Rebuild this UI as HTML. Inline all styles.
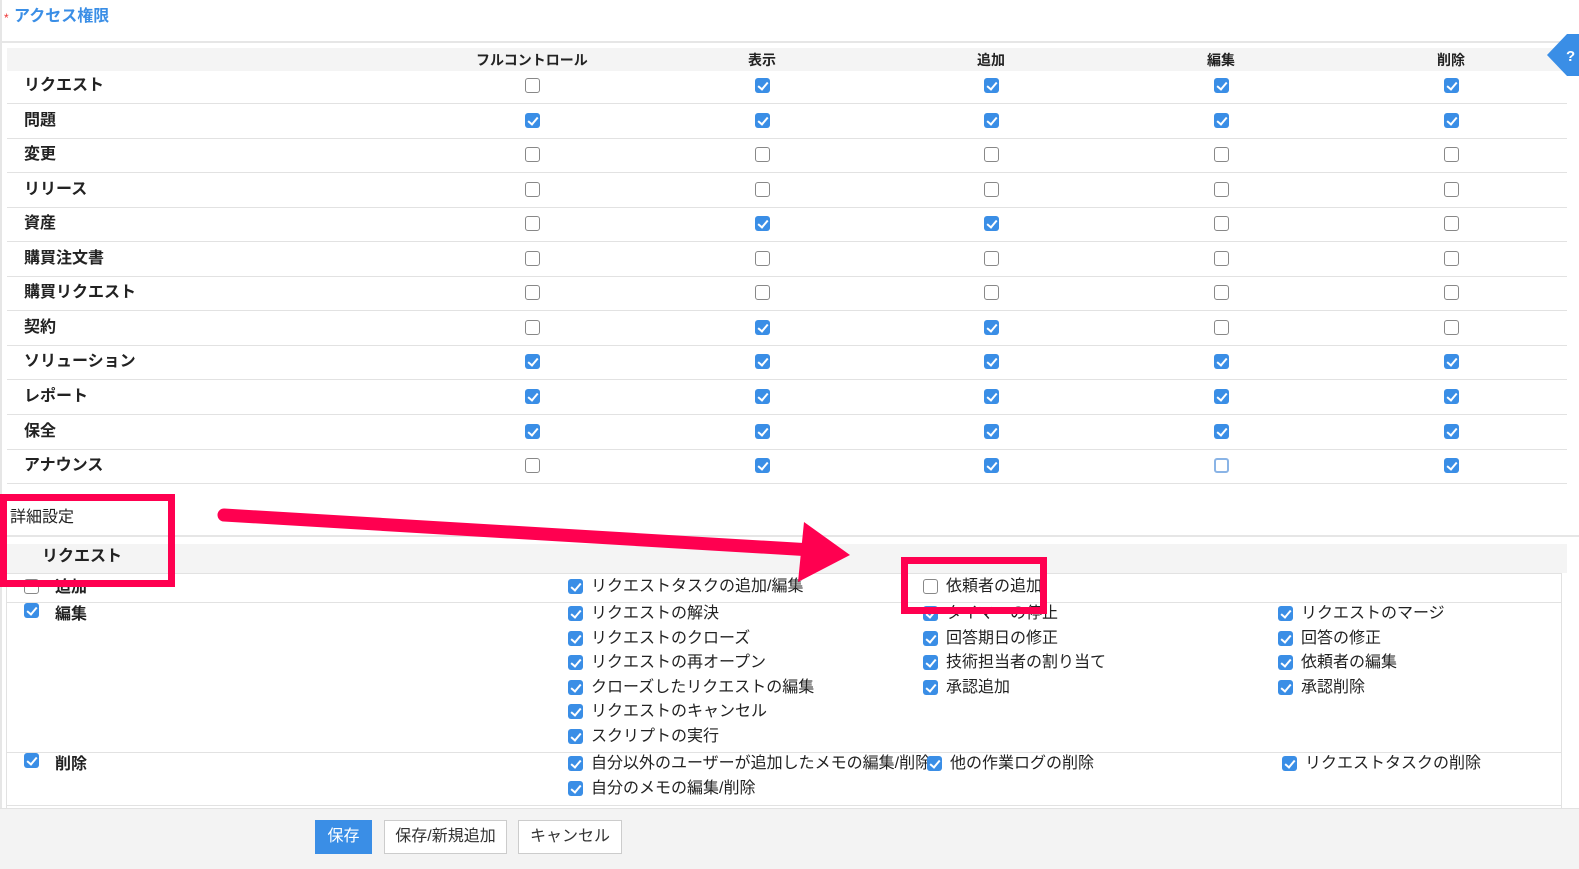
<!DOCTYPE html>
<html><head><meta charset="utf-8"><style>
body{margin:0;width:1579px;height:868px;position:relative;overflow:hidden;background:#fff;font-family:"Liberation Sans","Noto Sans CJK JP",sans-serif;color:#222}
.a{position:absolute}
.t{position:absolute;white-space:nowrap;font-size:16px;line-height:20px}
.b{font-weight:bold}
.c,.u{position:absolute;width:15px;height:15px;border-radius:3px;box-sizing:border-box}
.c{background:#3a8ee6}
.c:after{content:"";position:absolute;left:5px;top:2px;width:4px;height:8px;border:solid #fff;border-width:0 2px 2px 0;transform:rotate(40deg)}
.u{border:1px solid #888;background:#fff}
.hl{position:absolute;height:1px;background:#e2e2e2}
</style></head><body>
<div class="a" style="left:0;top:0;width:2px;height:808px;background:#e6e6e6"></div>
<div class="t" style="left:4px;top:8px;color:#e33;font-size:12px">*</div>
<div class="t b" style="left:14px;top:7px;color:#3a8ee6;font-size:16px">アクセス権限</div>
<div class="a" style="left:2px;top:41px;width:1577px;height:2px;background:#e6e6e6"></div>
<div class="a" style="left:7px;top:48px;width:1560px;height:23px;background:#f4f4f4"></div>
<div class="t b" style="left:476px;top:50px;font-size:14px">フルコントロール</div>
<div class="t b" style="left:748px;top:50px;font-size:14px" >表示</div>
<div class="t b" style="left:977px;top:50px;font-size:14px">追加</div>
<div class="t b" style="left:1207px;top:50px;font-size:14px">編集</div>
<div class="t b" style="left:1437px;top:50px;font-size:14px">削除</div>
<svg class="a" style="left:1545px;top:34px" width="34" height="42"><polygon points="22,0 34,0 34,42 22,42 2,21" fill="#3a8ee6"/><text x="21" y="27" fill="#fff" font-size="15" font-weight="bold" font-family="Liberation Sans">?</text></svg>
<div id="rows"></div>
<script>
var names=["リクエスト","問題","変更","リリース","資産","購買注文書","購買リクエスト","契約","ソリューション","レポート","保全","アナウンス"];
var m=["01111","11111","00000","00000","01100","00000","00000","01100","11111","11111","11111","01101"];
var xs=[532,762,991,1221,1451],h="";
for(var i=0;i<12;i++){var cy=86+i*34.55;
h+='<div class="t b" style="left:24px;top:'+(cy-10)+'px;font-size:16px">'+names[i]+'</div>';
for(var j=0;j<5;j++){var cls=m[i][j]=="1"?"c":"u";var st=(i==11&&j==3)?"border:2px solid #8ab4e6;":"";h+='<div class="'+cls+'" style="left:'+(xs[j]-7)+'px;top:'+(cy-8)+'px;'+st+'"></div>';}
h+='<div class="hl" style="left:7px;width:1560px;top:'+Math.round(cy+17)+'px"></div>';}
document.getElementById("rows").innerHTML=h;
</script>
<div class="t" style="left:10px;top:508px;font-size:16px">詳細設定</div>
<div class="a" style="left:2px;top:535px;width:1577px;height:2px;background:#e6e6e6"></div>
<div class="a" style="left:7px;top:544px;width:1560px;height:29px;background:#f4f4f4"></div>
<div class="t b" style="left:42px;top:547px">リクエスト</div>
<div class="a" style="left:6px;top:573px;width:1px;height:235px;background:#e2e2e2"></div>
<div class="a" style="left:1561px;top:573px;width:1px;height:235px;background:#e2e2e2"></div>
<div class="hl" style="left:7px;width:1555px;top:573px"></div>
<div class="u" style="left:24px;top:579px"></div><div class="t b" style="left:55px;top:578px">追加</div>
<div class="c" style="left:568px;top:579px"></div><div class="t" style="left:591px;top:577px">リクエストタスクの追加/編集</div>
<div class="u" style="left:923px;top:579px"></div><div class="t" style="left:946px;top:577px">依頼者の追加</div>
<div class="hl" style="left:7px;width:1555px;top:602px"></div>
<div class="c" style="left:24px;top:603px"></div><div class="t b" style="left:55px;top:605px">編集</div>
<div class="c" style="left:568px;top:606px"></div><div class="t" style="left:591px;top:604px">リクエストの解決</div>
<div class="c" style="left:568px;top:631px"></div><div class="t" style="left:591px;top:629px">リクエストのクローズ</div>
<div class="c" style="left:568px;top:655px"></div><div class="t" style="left:591px;top:653px">リクエストの再オープン</div>
<div class="c" style="left:568px;top:680px"></div><div class="t" style="left:591px;top:678px">クローズしたリクエストの編集</div>
<div class="c" style="left:568px;top:704px"></div><div class="t" style="left:591px;top:702px">リクエストのキャンセル</div>
<div class="c" style="left:568px;top:729px"></div><div class="t" style="left:591px;top:727px">スクリプトの実行</div>
<div class="c" style="left:923px;top:606px"></div><div class="t" style="left:946px;top:604px">タイマーの停止</div>
<div class="c" style="left:923px;top:631px"></div><div class="t" style="left:946px;top:629px">回答期日の修正</div>
<div class="c" style="left:923px;top:655px"></div><div class="t" style="left:946px;top:653px">技術担当者の割り当て</div>
<div class="c" style="left:923px;top:680px"></div><div class="t" style="left:946px;top:678px">承認追加</div>
<div class="c" style="left:1278px;top:606px"></div><div class="t" style="left:1301px;top:604px">リクエストのマージ</div>
<div class="c" style="left:1278px;top:631px"></div><div class="t" style="left:1301px;top:629px">回答の修正</div>
<div class="c" style="left:1278px;top:655px"></div><div class="t" style="left:1301px;top:653px">依頼者の編集</div>
<div class="c" style="left:1278px;top:680px"></div><div class="t" style="left:1301px;top:678px">承認削除</div>
<div class="hl" style="left:7px;width:1555px;top:752px"></div>
<div class="c" style="left:24px;top:753px"></div><div class="t b" style="left:55px;top:755px">削除</div>
<div class="c" style="left:568px;top:756px"></div><div class="t" style="left:591px;top:754px">自分以外のユーザーが追加したメモの編集/削除</div>
<div class="c" style="left:927px;top:756px"></div><div class="t" style="left:950px;top:754px">他の作業ログの削除</div>
<div class="c" style="left:1282px;top:756px"></div><div class="t" style="left:1305px;top:754px">リクエストタスクの削除</div>
<div class="c" style="left:568px;top:781px"></div><div class="t" style="left:591px;top:779px">自分のメモの編集/削除</div>
<div class="hl" style="left:7px;width:1555px;top:805px"></div>
<div class="a" style="left:0;top:808px;width:1579px;height:60px;background:#f3f3f3;border-top:1px solid #e2e2e2"></div>
<div class="a" style="left:315px;top:820px;width:57px;height:34px;background:#3a8ee6;color:#fff;font-size:16px;line-height:34px;text-align:center">保存</div>
<div class="a" style="left:384px;top:820px;width:121px;height:32px;background:#fff;border:1px solid #ccc;color:#333;font-size:16px;line-height:32px;text-align:center">保存/新規追加</div>
<div class="a" style="left:518px;top:820px;width:102px;height:32px;background:#fff;border:1px solid #ccc;color:#333;font-size:16px;line-height:32px;text-align:center">キャンセル</div>
<div class="a" style="left:0;top:494px;width:175px;height:93px;border:7px solid #ff0050;box-sizing:border-box"></div>
<div class="a" style="left:901px;top:557px;width:146px;height:57px;border:7px solid #ff0050;box-sizing:border-box"></div>
<svg class="a" style="left:0;top:0" width="1579" height="868"><line x1="224" y1="515" x2="812" y2="550" stroke="#ff0050" stroke-width="13" stroke-linecap="round"/><polygon points="850,555 804,522 798,582" fill="#ff0050"/></svg>
</body></html>
